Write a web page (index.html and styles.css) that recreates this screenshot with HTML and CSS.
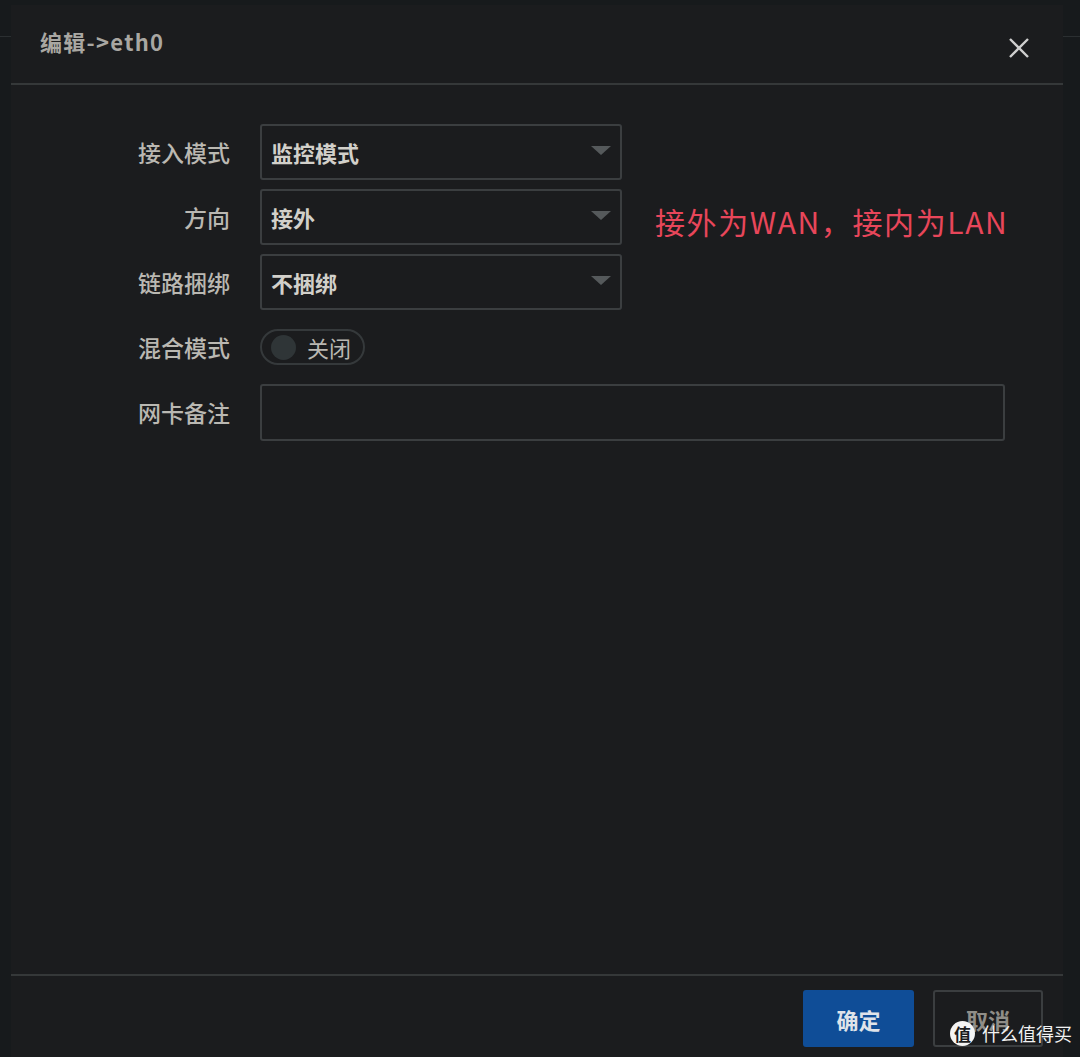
FILE: index.html
```html
<!DOCTYPE html>
<html lang="zh-CN">
<head>
    <meta charset="UTF-8">
    <meta name="viewport" content="width=device-width, initial-scale=1.0">
    <title>编辑->eth0</title>
    <link rel="stylesheet" href="styles.css">
</head>
<body>

    <div class="page-bar"></div>

    <div class="modal">
        <div class="modal-header">
            <h2 class="modal-title">编辑-&gt;eth0</h2>
            <button class="close-btn" aria-label="关闭">
                <svg width="22" height="22" viewBox="0 0 22 22">
                    <path d="M2 2 L20 20 M20 2 L2 20" stroke="#cfcfcf" stroke-width="2.4" fill="none"/>
                </svg>
            </button>
        </div>

        <div class="modal-body">
            <div class="form">
                <label class="form-label">接入模式</label>
                <div class="form-control">
                    <div class="select">
                        <span>监控模式</span>
                        <i class="caret"></i>
                    </div>
                </div>

                <label class="form-label">方向</label>
                <div class="form-control">
                    <div class="select">
                        <span>接外</span>
                        <i class="caret"></i>
                    </div>
                    <span class="hint">接外为WAN，接内为LAN</span>
                </div>

                <label class="form-label">链路捆绑</label>
                <div class="form-control">
                    <div class="select">
                        <span>不捆绑</span>
                        <i class="caret"></i>
                    </div>
                </div>

                <label class="form-label">混合模式</label>
                <div class="form-control">
                    <div class="switch">
                        <span class="switch-knob"></span>
                        <span class="switch-text">关闭</span>
                    </div>
                </div>

                <label class="form-label">网卡备注</label>
                <div class="form-control">
                    <input class="text-input" type="text">
                </div>
            </div>
        </div>

        <div class="modal-footer">
            <button class="btn btn-primary">确定</button>
            <button class="btn btn-default">取消</button>
        </div>
    </div>

    <!-- site watermark -->
    <div class="watermark">
        <span class="watermark-logo">值</span>
        <span class="watermark-text">什么值得买</span>
    </div>

</body>
</html>
```

FILE: styles.css
```css
html, body {
    margin: 0;
    height: 100%;
    overflow: hidden;
}
body {
    background-color: #171a1c;
    font-family: "Noto Sans CJK SC", "Microsoft YaHei", sans-serif;
    color: #bdbbb6;
    position: relative;
}
.page-bar {
    height: 36px;
    border-bottom: 1px solid #2b2f31;
}
.modal {
    position: absolute;
    top: 5px;
    left: 11px;
    width: 1052px;
    height: 1100px;
    background-color: #1b1c1e;
    display: flex;
    flex-direction: column;
}
.modal-header {
    height: 78px;
    border-bottom: 2px solid #353839;
    display: flex;
    align-items: center;
    justify-content: space-between;
    padding: 0 33px 0 29px;
    flex-shrink: 0;
}
.modal-title {
    margin: 0 0 6px 0;
    font-size: 22px;
    font-weight: 700;
    color: #a9a7a2;
    letter-spacing: 1.3px;
}
.close-btn {
    background: none;
    border: none;
    padding: 0;
    margin-top: 8px;
    width: 22px;
    height: 22px;
    cursor: pointer;
}
.modal-body {
    height: 891px;
    padding-top: 39px;
    box-sizing: border-box;
    border-bottom: 2px solid #353839;
    flex-shrink: 0;
}
.form {
    display: grid;
    grid-template-columns: 219px 1fr;
    grid-auto-rows: 56px;
    column-gap: 30px;
    row-gap: 9px;
}
.form-label {
    display: flex;
    align-items: center;
    justify-content: flex-end;
    font-size: 23px;
    font-weight: 500;
    color: #bab8b2;
}
.form-control {
    display: flex;
    align-items: center;
}
.select {
    width: 362px;
    height: 56px;
    box-sizing: border-box;
    border: 2px solid #3b3e40;
    border-radius: 3px;
    display: flex;
    align-items: center;
    justify-content: space-between;
    padding: 0 9px 0 9px;
    font-size: 22px;
    font-weight: 700;
    color: #d2d0ca;
}
.caret {
    width: 0;
    height: 0;
    border-left: 10px solid transparent;
    border-right: 10px solid transparent;
    border-top: 9px solid #55595b;
    margin-bottom: 4px;
}
.hint {
    margin-left: 33px;
    margin-top: 8px;
    font-size: 30px;
    letter-spacing: 1.6px;
    color: #e8465a;
}
.switch {
    width: 105px;
    height: 36px;
    box-sizing: border-box;
    border: 2px solid #35393b;
    border-radius: 18px;
    display: flex;
    align-items: center;
    padding-left: 9px;
}
.switch-knob {
    width: 25px;
    height: 25px;
    border-radius: 50%;
    background-color: #2f3537;
}
.switch-text {
    margin-left: 11px;
    font-size: 22px;
    color: #bab8b2;
}
.text-input {
    width: 745px;
    height: 57px;
    box-sizing: border-box;
    background: transparent;
    border: 2px solid #3b3e40;
    border-radius: 3px;
    margin-top: 1px;
    outline: none;
    color: #d2d0ca;
    font-size: 20px;
}
.modal-footer {
    display: flex;
    justify-content: flex-end;
    gap: 19px;
    padding: 14px 20px 0 0;
}
.btn {
    width: 111px;
    height: 57px;
    box-sizing: border-box;
    border-radius: 3px;
    font-family: inherit;
    font-size: 22px;
    font-weight: 700;
    cursor: pointer;
}
.btn-primary {
    background-color: #0f4d97;
    border: none;
    color: #dfe3ea;
}
.btn-default {
    width: 110px;
    background: transparent;
    border: 2px solid #3b3e40;
    color: #8f8d88;
}
.watermark {
    position: absolute;
    left: 950px;
    top: 1020px;
    display: flex;
    align-items: center;
    gap: 7px;
    white-space: nowrap;
}
.watermark-logo {
    width: 25px;
    height: 25px;
    border-radius: 50%;
    background-color: #f4f4f4;
    color: #1b1c1e;
    font-size: 17px;
    font-weight: 700;
    line-height: 25px;
    text-align: center;
}
.watermark-text {
    font-size: 18px;
    color: #f2f2f2;
}
```
